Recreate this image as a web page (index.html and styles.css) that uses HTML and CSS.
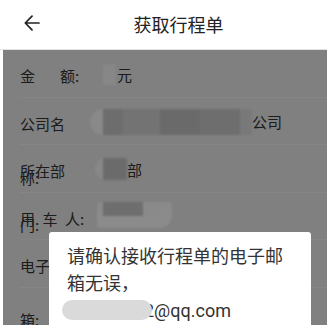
FILE: index.html
```html
<!DOCTYPE html>
<html lang="zh-CN">
<head>
<meta charset="utf-8">
<title>获取行程单</title>
<link rel="stylesheet" href="styles.css">
</head>
<body>
<header class="header">
  <div class="back">
    <svg width="16" height="16" viewBox="0 0 16 16" aria-hidden="true">
      <path d="M15 8H1.5M8 1.2L1.3 8l6.7 6.8" fill="none" stroke="#222" stroke-width="1.7" stroke-linecap="round" stroke-linejoin="round"/>
    </svg>
  </div>
  <div class="title">获取行程单</div>
</header>
<main class="main">
  <div class="list">
    <div class="row">
      <div class="label nowrap"><span class="wide">金</span>额:</div>
      <div class="value"><span class="blur b-yuan"></span>元</div>
    </div>
    <div class="row">
      <div class="label">公司名称:</div>
      <div class="value"><span class="blur b-company"></span>公司</div>
    </div>
    <div class="row">
      <div class="label">所在部门:</div>
      <div class="value"><span class="blur b-dept"></span>部</div>
    </div>
    <div class="row">
      <div class="label nowrap"><span class="spread">用车</span>人:</div>
      <div class="value"><span class="blur b-user"></span></div>
    </div>
    <div class="row">
      <div class="label">电子邮箱:</div>
      <div class="value"></div>
    </div>
  </div>
  <div class="overlay"></div>
  <div class="dialog">
    <p class="msg">请确认接收行程单的电子邮箱无误，<br><span class="mail-blur"></span>2@qq.com</p>
  </div>
</main>
</body>
</html>
```
FILE: styles.css
```css
* { box-sizing: border-box; }
html, body { margin: 0; padding: 0; }
body {
  background: #fff;
  font-family: Roboto, "Noto Sans CJK SC", sans-serif;
  width: 327px;
  height: 325px;
  overflow: hidden;
}
.header {
  height: 50px;
  display: flex;
  align-items: center;
  border-bottom: 1px solid #e2e2e2;
  padding-bottom: 1px;
}
.back {
  width: 60px;
  padding-left: 24px;
  display: flex;
  align-items: center;
  margin-top: -2px;
}
.back svg { display: block; }
.title {
  flex: 1;
  text-align: center;
  padding-right: 30px;
  font-size: 18px;
  color: #222;
  font-family: "Noto Sans CJK SC", sans-serif;
}
.main {
  position: relative;
  margin-left: 3px;
  height: 275px;
  background: #e9e9e9;
  overflow: hidden;
}
.list { padding-left: 17px; }
.row {
  display: flex;
  height: 47.5px;
  border-bottom: 1px solid #f3f3f3;
  font-family: "Noto Sans CJK SC", sans-serif;
  font-size: 15px;
  color: #333;
}
.label {
  width: 50px;
  flex-shrink: 0;
  line-height: 54px;
  margin-top: -1px;
}
.nowrap { white-space: nowrap; }
.wide { margin-right: 25px; }
.spread { letter-spacing: 7.5px; }
.value {
  margin-left: 33px;
  line-height: 53px;
  margin-top: -1px;
  white-space: nowrap;
  display: flex;
  align-items: center;
  height: 50px;
}
.blur {
  display: inline-block;
  filter: blur(1.2px);
}
.b-yuan {
  width: 13px;
  height: 21px;
  background: #f6f6f6;
  margin-right: 1px;
}
.b-company {
  width: 162px;
  height: 26px;
  margin-left: -13px;
  border-radius: 13px 4px 4px 13px;
  background: linear-gradient(90deg, #fafafa 0 13px, #c6c6c6 13px 33px, #d2d2d2 33px 70px, #c2c2c2 70px 110px, #c9c9c9 110px 150px, #dcdcdc 150px);
}
.b-dept {
  width: 32px;
  height: 22px;
  margin-left: -8px;
  border-radius: 11px 2px 2px 11px;
  background: linear-gradient(90deg, #f7f7f7 0 8px, #c4c4c4 8px);
}
.b-user {
  width: 75px;
  height: 26px;
  margin-left: -6px;
  margin-top: -4px;
  border-radius: 4px 4px 13px 4px;
  background: linear-gradient(90deg, #fbfbfb 0 6px, transparent 6px 46px, #fbfbfb 46px);
  background-color: #c8c8c8;
  box-shadow: inset 0 -12px 0 #fdfdfd;
}
.overlay {
  position: absolute;
  inset: 0;
  background: rgba(0, 0, 0, 0.45);
}
.dialog {
  position: absolute;
  left: 46px;
  top: 182px;
  width: 262px;
  height: 200px;
  background: #fff;
  border-radius: 3px;
  padding: 11px 18px;
}
.msg {
  margin: 0;
  font-family: Roboto, "Noto Sans CJK SC", sans-serif;
  font-size: 18px;
  line-height: 27px;
  color: #333;
}
.mail-blur {
  position: relative;
  display: inline-block;
  vertical-align: middle;
  width: 90px;
  height: 20px;
  margin-left: -5px;
  margin-right: -8px;
  margin-top: -4px;
  border-radius: 10px;
  background: #dadada;
  filter: blur(0.6px);
}
```
